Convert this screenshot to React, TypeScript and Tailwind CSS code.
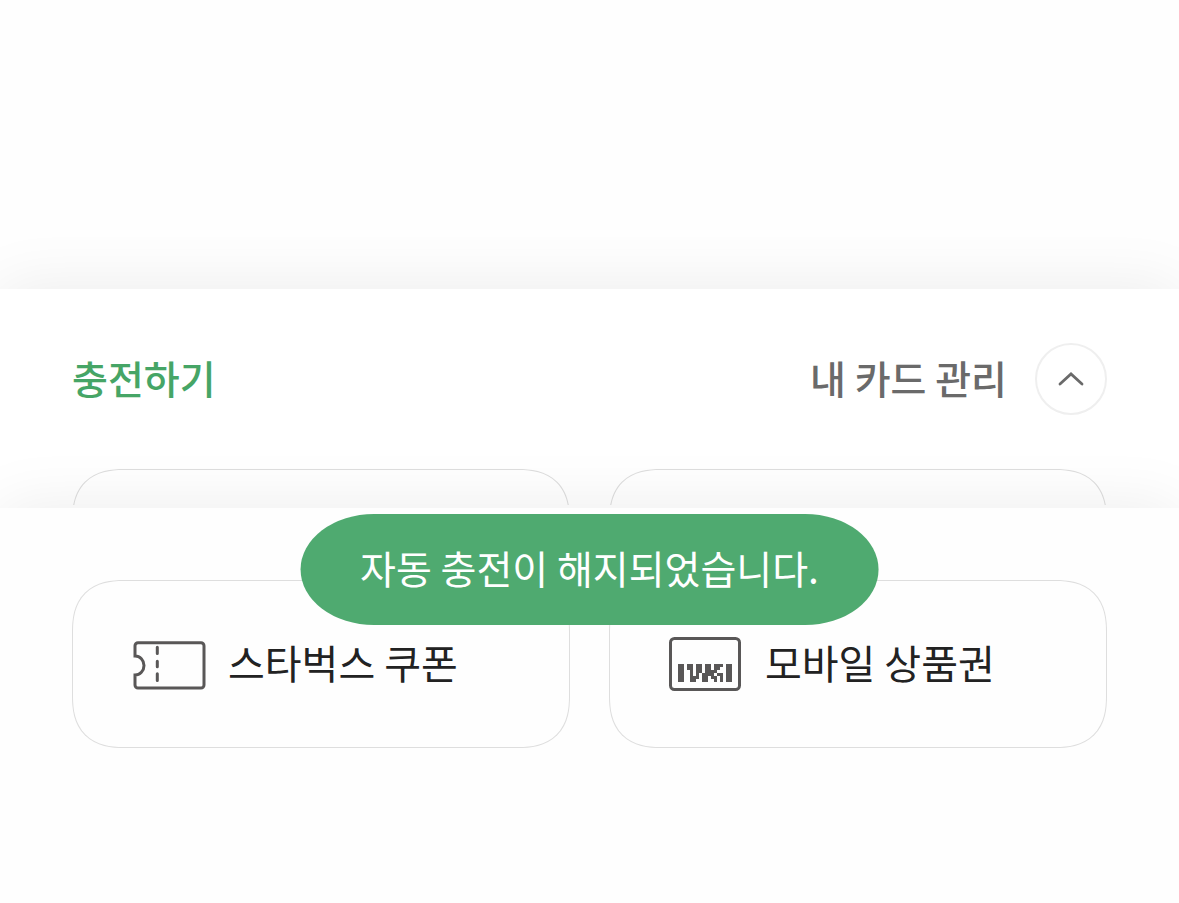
import type { ReactNode } from "react";

const BARCODE_ROWS = [
  "110110110111",
  "110110110110",
  "010110111100",
  "010101111011",
  "011101101101",
  "011001100101",
];

function TicketIcon() {
  return (
    <svg
      width="72"
      height="54"
      viewBox="0 0 72 54"
      fill="none"
      stroke="#595757"
      strokeWidth="3"
      aria-hidden="true"
      className="shrink-0 overflow-visible"
    >
      <path d="M3 19V8.700a3 3 0 0 1 3-3H69a3 3 0 0 1 3 3V48a3 3 0 0 1-3 3H6a3 3 0 0 1-3-3V38c5 0 9-4.200 9-9.500S8 19 3 19Z" />
      <path d="M25.300 10.200v6.300M25.300 24.200v5.600M25.300 36.800v6.700" strokeLinecap="round" />
    </svg>
  );
}

function BarcodeIcon() {
  return (
    <svg width="72" height="54" viewBox="0 0 72 54" fill="none" aria-hidden="true" className="shrink-0">
      <rect x="1.500" y="1.500" width="69" height="51" rx="4" stroke="#595757" strokeWidth="3" />
      <path fill="#595757" d="M9 27h6v18H9ZM57 27h6v18h-6Z" />
      {BARCODE_ROWS.map((row, y) =>
        [...row].map((bit, x) =>
          bit === "1" ? (
            <rect key={`${x}-${y}`} x={18 + x * 3} y={27 + y * 3} width="3" height="3" fill="#595757" />
          ) : null,
        ),
      )}
    </svg>
  );
}

function Card({ icon, label }: { icon: ReactNode; label: string }) {
  return (
    <button
      type="button"
      className="flex h-42 w-full items-center gap-6 rounded-[52px] border border-[#dedede] px-[59px] text-[40px] leading-[56px] text-[#222] [corner-shape:superellipse(1.3)]"
    >
      {icon}
      <span className="pb-1">{label}</span>
    </button>
  );
}

export default function App() {
  return (
    <div className="flex min-h-screen flex-col overflow-hidden bg-[#fefefe] font-['Noto_Sans_CJK_KR',sans-serif]">
      <div className="h-[289px]" />

      <section className="relative bg-white px-[72px] pt-[54px] pb-[3px] shadow-[0_0_60px_rgba(0,0,0,0.08)]">
        <header className="flex h-18 items-center justify-between text-[39px] leading-[56px] font-medium">
          <a href="#charge" className="pb-1 text-[#46a566]">
            충전하기
          </a>
          <div className="flex items-center gap-7">
            <a href="#cards" className="pb-1 text-[#6a6a6a]">
              내 카드 관리
            </a>
            <button
              type="button"
              aria-label="접기"
              className="flex size-18 items-center justify-center rounded-full border-2 border-[#efefef]"
            >
              <svg width="28" height="16" viewBox="0 0 28 16" fill="none" stroke="#6a6a6a" strokeWidth="2.800" strokeLinecap="round" aria-hidden="true">
                <path d="M3 13 14 3l11 10" />
              </svg>
            </button>
          </div>
        </header>
        <div className="mt-[54px] grid h-9 grid-cols-2 gap-[39px] overflow-hidden">
          <div className="h-42 rounded-[52px] border border-[#dedede] [corner-shape:superellipse(1.3)]" />
          <div className="h-42 rounded-[52px] border border-[#dedede] [corner-shape:superellipse(1.3)]" />
        </div>
      </section>

      <section className="relative grow bg-[#fefefe] px-[72px] pt-18 shadow-[0_0_60px_rgba(0,0,0,0.08)]">
        <div className="grid grid-cols-2 gap-[39px]">
          <Card icon={<TicketIcon />} label="스타벅스 쿠폰" />
          <Card icon={<BarcodeIcon />} label="모바일 상품권" />
        </div>
        <div
          role="status"
          className="absolute top-1.5 left-1/2 -translate-x-1/2 rounded-[74px/56px] bg-[#4faa70] px-15 pt-[26px] pb-[30px] text-[39px] leading-[55px] whitespace-nowrap text-white"
        >
          자동 충전이 해지되었습니다.
        </div>
      </section>
    </div>
  );
}
